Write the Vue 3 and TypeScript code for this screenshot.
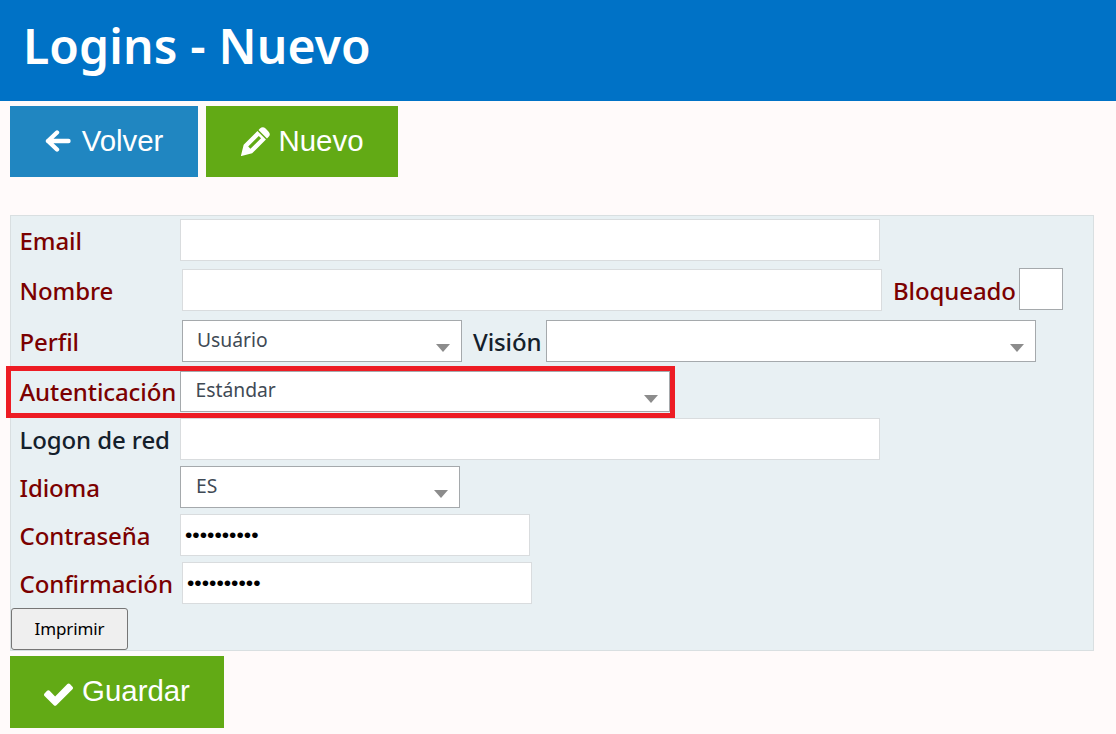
<script setup lang="ts">
const check = 'M1671 566q0 40-28 68l-724 724-136 136q-28 28-68 28t-68-28l-136-136-362-362q-28-28-28-68t28-68l136-136q28-28 68-28t68 28l294 295 656-657q28-28 68-28t68 28l136 136q28 28 28 68z'
const pencil = 'M-6 6V4a4 4 0 0 1 4-4h4a4 4 0 0 1 4 4v2zM-6 7.5H6V27L0 37L-6 27zM-1.6 10V25H1.6V10z'
</script>

<template>
  <div class="page">
    <header class="title-bar"><h1>Logins - Nuevo</h1></header>

    <div class="actions">
      <button class="action blue back" type="button">
        <svg viewBox="0 0 26 24" class="icon arrow">
          <path d="M3 12H23.5M12 3.5L3 12L12 20.5" />
        </svg>Volver
      </button>
      <button class="action green nuevo" type="button">
        <svg viewBox="0 0 30 30" class="icon pencil">
          <path :d="pencil" transform="translate(26 4) rotate(45)" fill-rule="evenodd" />
        </svg>Nuevo
      </button>
    </div>

    <form class="panel" @submit.prevent>
      <div class="row r-email">
        <label class="req">Email</label>
        <input class="field long" type="text" />
      </div>
      <div class="row r-nombre">
        <label class="req wide">Nombre</label>
        <input class="field long" type="text" />
        <label class="req inline-bloq">Bloqueado</label>
        <span class="check"></span>
      </div>
      <div class="row r-perfil">
        <label class="req wide">Perfil</label>
        <div class="select short"><span>Usuário</span></div>
        <label class="inline-vision">Visión</label>
        <div class="select vision"></div>
      </div>
      <div class="row r-auth">
        <label class="req">Autenticación</label>
        <div class="select auth"><span>Estándar</span></div>
      </div>
      <div class="row r-logon">
        <label>Logon de red</label>
        <input class="field long" type="text" />
      </div>
      <div class="row r-tight">
        <label class="req">Idioma</label>
        <div class="select short lang"><span>ES</span></div>
      </div>
      <div class="row r-tight">
        <label class="req">Contraseña</label>
        <input class="field pass" type="password" value="1234567890" />
      </div>
      <div class="row r-tight">
        <label class="req wide">Confirmación</label>
        <input class="field pass" type="password" value="1234567890" />
      </div>
      <button class="print" type="button">Imprimir</button>
    </form>

    <button class="action green save" type="button">
      <svg viewBox="121 314 1550 1208" class="icon tick"><path :d="check" /></svg>Guardar
    </button>
  </div>
</template>

<style>
html, body { margin: 0; background: #fffafa; }
</style>

<style scoped>
.page {
  width: 1116px;
  height: 734px;
  overflow: hidden;
  background: #fffafa;
  font-family: "Noto Sans", "Open Sans", sans-serif;
}
.title-bar {
  height: 101px;
  background: #0072c6;
  display: flex;
  align-items: center;
  padding-left: 23px;
  box-sizing: border-box;
}
.title-bar h1 {
  margin: 0;
  color: #fff;
  font-size: 48px;
  font-weight: 600;
  line-height: 1;
  letter-spacing: 0.15px;
  padding-bottom: 10px;
}
.actions {
  display: flex;
  gap: 8px;
  margin: 5px 0 38px 10px;
}
.action {
  display: flex;
  align-items: center;
  justify-content: center;
  border: 0;
  padding: 0 0 2px;
  height: 71px;
  color: #fff;
  font-family: "Liberation Sans", Arial, sans-serif;
  font-size: 29.4px;
  line-height: 1;
}
.blue { background: #2086c1; }
.green { background: #62aa15; }
.back { width: 188px; }
.nuevo { width: 192px; }
.save { width: 214px; height: 72px; margin: 5px 0 0 10px; }
.icon { fill: #fff; flex: none; }
.arrow {
  width: 26px;
  height: 24px;
  margin-right: 11px;
  fill: none;
  stroke: #fff;
  stroke-width: 4.4;
  stroke-linecap: round;
  stroke-linejoin: round;
}
.pencil { width: 30px; height: 30px; margin-right: 8px; }
.tick { width: 29px; height: 23px; margin-right: 9px; margin-top: 6px; }

.panel {
  box-sizing: border-box;
  width: 1084px;
  height: 436px;
  margin-left: 10px;
  padding: 3px 0 0 0;
  background: #e8f0f3;
  border: 1px solid #d9dfe1;
}
.row {
  display: flex;
  align-items: flex-start;
}
.row label {
  box-sizing: border-box;
  width: 169px;
  padding-left: 8.5px;
  flex: none;
  font-size: 24px;
  font-weight: 500;
  line-height: 44px;
  height: 42px;
  letter-spacing: -0.1px;
  color: #14202b;
  white-space: nowrap;
}
.row label.req { color: #7b0000; }
.row label.wide { width: 171px; }
.r-nombre { margin-top: 8px; }
.r-perfil { margin-top: 9px; }
.r-auth {
  margin-top: 9px;
  height: 42px;
  width: 659px;
  outline: 5px solid #ed1c24;
}
.r-logon { margin-top: 5px; }
.r-auth label { line-height: 42px; }
.r-tight { margin-top: 6px; }

.field {
  box-sizing: border-box;
  height: 42px;
  background: #fff;
  border: 1px solid #d9dcde;
  padding: 0 6px;
  outline: none;
  font-family: "Liberation Sans", Arial, sans-serif;
}
.long { width: 700px; }
.pass { width: 350px; padding: 0 4px; font-size: 21px; }

.check {
  box-sizing: border-box;
  width: 44px;
  height: 42px;
  margin-top: -1px;
  margin-left: 3px;
  background: #fff;
  border: 1px solid #a5a9ac;
}
.row label.inline-bloq { width: auto; padding-left: 11px; }
.row label.inline-vision { width: auto; padding-left: 11px; padding-right: 4.5px; }

.select {
  box-sizing: border-box;
  position: relative;
  height: 42px;
  background: #fff;
  border: 1px solid #a5a9ac;
  padding-left: 14px;
  font-size: 19.3px;
  line-height: 37px;
  color: #3f4a55;
}
.select::after {
  content: "";
  position: absolute;
  right: 11px;
  top: 23px;
  border-left: 7px solid transparent;
  border-right: 7px solid transparent;
  border-top: 8px solid #8c8c8c;
}
.short { width: 280px; }
.lang { padding-left: 15px; }
.vision { width: 490px; }
.auth { width: 490px; height: 41px; padding-left: 14.5px; line-height: 35px; }

.print {
  display: block;
  box-sizing: border-box;
  width: 117px;
  height: 42px;
  margin: 4px 0 0 0;
  padding: 0 0 2px;
  background: #efefef;
  border: 1px solid #767676;
  border-radius: 3px;
  color: #000;
  font-family: "Noto Sans", "Open Sans", sans-serif;
  font-size: 17px;
  letter-spacing: -0.1px;
}
</style>
